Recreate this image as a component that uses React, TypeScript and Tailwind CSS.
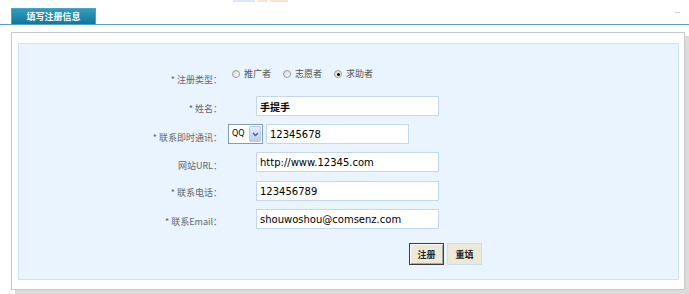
import React from 'react';
import { clsx } from 'clsx';

const Row = ({ label, children, className, labelPad = 'pt-[7px]' }: { label: React.ReactNode; children: React.ReactNode; className?: string; labelPad?: string }) => (
    <div className={clsx('flex items-start', className)}>
        <div className={clsx('w-[203px] shrink-0 text-right text-[9px] leading-[12px] text-[#666]', labelPad)}>{label}</div>
        <div className="ml-[6px] flex items-center">{children}</div>
    </div>
);

const Field = ({ value, className, bold }: { value: string; className?: string; bold?: boolean }) => (
    <input
        readOnly
        value={value}
        className={clsx(
            "block h-[20px] border border-[#c2d8ec] bg-white pl-[3px] text-[10px] text-black outline-none font-['DejaVu_Sans','Noto_Sans_CJK_SC',sans-serif]",
            bold && 'font-bold',
            className
        )}
    />
);

const Radio = ({ label, checked }: { label: string; checked?: boolean }) => (
    <label className="flex items-center">
        <span className="flex h-[8px] w-[8px] items-center justify-center rounded-full border border-[#9a9a9a] bg-gradient-to-br from-[#d6d6d6] to-white">
            {checked && <span className="h-[3px] w-[3px] rounded-full bg-black" />}
        </span>
        <span className="ml-[4px] text-[9px] leading-[12px] text-[#555]">{label}</span>
    </label>
);

export default function App() {
    return (
        <div className="h-[294px] w-[689px] overflow-hidden bg-white font-['Noto_Sans_CJK_SC',sans-serif]">
            {/* faint logo remnants cut off at the top */}
            <div className="flex h-[8px] items-start pl-[233px]">
                <div className="h-[2px] w-[22px] bg-[#dbe6f6]" />
                <div className="ml-[3px] h-[2px] w-[9px] bg-[#fbe3cf]" />
                <div className="ml-[3px] h-[2px] w-[18px] bg-[#fbe3cf]" />
            </div>

            {/* tab bar */}
            <div className="flex items-start justify-between border-b border-[#5a9fca] pl-[11px] pr-[9px]">
                <div className="flex h-[16px] w-[85px] items-center justify-center border border-b-0 border-[#4aa4c4] bg-gradient-to-b from-[#2f9cc0] to-[#0f7899] text-[9px] font-semibold leading-none text-white">
                    填写注册信息
                </div>
                <div className="mt-[4px] h-[1px] w-[5px] bg-[#cfcfcf]" />
            </div>

            {/* form panel */}
            <div className="ml-[11px] mt-[7px] h-[258px] w-[674px] border border-[#c8c8c8] bg-white pb-[9px] pl-[6px] pr-[5px] pt-[10px] shadow-[4px_4px_0_#dcdcdc]">
                <div className="h-[237px] border border-[#cfe3f3] bg-[#eaf4fe] pt-[24px]">
                    <Row label="* 注册类型：" labelPad="pt-[6px]" className="h-[12px]">
                        <div className="ml-[4px] flex h-[12px] items-center gap-[12px]">
                            <Radio label="推广者" />
                            <Radio label="志愿者" />
                            <Radio label="求助者" checked />
                        </div>
                    </Row>

                    <Row label="* 姓名：" className="mt-[16px] h-[20px]">
                        <Field value="手提手" bold className="ml-[28px] w-[183px]" />
                    </Row>

                    <Row label="* 联系即时通讯：" className="mt-[8px] h-[20px]" labelPad="pt-[8px]">
                        <div className="flex h-[20px] w-[35px] items-center border border-[#7f9db9] bg-white">
                            <span className="flex-1 pl-[3px] text-[8px] leading-none text-black font-['DejaVu_Sans',sans-serif]">QQ</span>
                            <span className="mr-[1px] flex h-[16px] w-[12px] items-center justify-center rounded-[2px] border border-[#b4c8f3] bg-gradient-to-b from-[#e6eefe] to-[#b8ccf5]">
                                <svg width="7" height="5" viewBox="0 0 7 5">
                                    <path d="M1 1 L3.5 3.5 L6 1" fill="none" stroke="#4d6185" strokeWidth="1.4" />
                                </svg>
                            </span>
                        </div>
                        <Field value="12345678" className="ml-[3px] w-[143px]" />
                    </Row>

                    <Row label="网站URL：" className="mt-[8px] h-[20px]" labelPad="pt-[8px]">
                        <Field value="http://www.12345.com" className="ml-[28px] w-[183px]" />
                    </Row>

                    <Row label="* 联系电话：" className="mt-[9px] h-[20px]" labelPad="pt-[6px]">
                        <Field value="123456789" className="ml-[28px] w-[183px]" />
                    </Row>

                    <Row label="* 联系Email：" className="mt-[8px] h-[20px]">
                        <Field value="shouwoshou@comsenz.com" className="ml-[28px] w-[183px]" />
                    </Row>

                    <div className="mt-[14px] flex gap-[3px] pl-[390px]">
                        <button className="h-[22px] w-[35px] border border-[#3c3c3c] bg-[#ece9d8] text-[9px] font-bold leading-none text-[#222] shadow-[inset_1px_1px_0_#fff,inset_-1px_-1px_0_#aca899]">
                            注册
                        </button>
                        <button className="h-[22px] w-[35px] border border-[#c9def0] bg-[#ece9d8] text-[9px] font-bold leading-none text-[#222]">
                            重填
                        </button>
                    </div>
                </div>
            </div>
        </div>
    );
}
